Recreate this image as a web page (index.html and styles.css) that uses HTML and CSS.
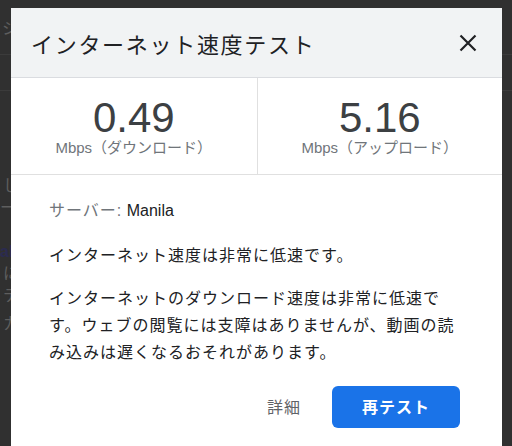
FILE: index.html
```html
<!DOCTYPE html>
<html lang="ja">
<head>
    <meta charset="UTF-8">
    <meta name="viewport" content="width=device-width, initial-scale=1.0">
    <title>インターネット速度テスト</title>
    <link rel="stylesheet" href="styles.css">
</head>
<body>
    <!-- page behind the dimmed overlay -->
    <div class="page">
        <div class="page-bar"><span class="page-glyph">シ</span></div>
        <div class="page-sub"></div>
        <div class="page-text">
            <p class="page-line">し</p>
            <p class="page-line page-rule">ー</p>
            <p class="page-line page-link">ab</p>
            <p class="page-line">に往</p>
            <p class="page-line">テ</p>
            <p class="page-line page-last">カ</p>
        </div>
    </div>

    <div class="dialog">
        <div class="dialog-header">
            <h1 class="dialog-title">インターネット速度テスト</h1>
            <button class="close" aria-label="閉じる">
                <svg width="18" height="18" viewBox="0 0 18 18">
                    <path d="M1.5 1.5 L16.5 16.5 M16.5 1.5 L1.5 16.5" stroke="currentColor" stroke-width="2.2" fill="none"/>
                </svg>
            </button>
        </div>

        <div class="stats">
            <div class="stat">
                <div class="stat-value">0.49</div>
                <div class="stat-label">Mbps（ダウンロード）</div>
            </div>
            <div class="stat stat-right">
                <div class="stat-value">5.16</div>
                <div class="stat-label">Mbps（アップロード）</div>
            </div>
        </div>

        <div class="dialog-body">
            <p class="server"><span class="server-key">サーバー:</span> Manila</p>
            <p class="summary">インターネット速度は非常に低速です。</p>
            <p class="detail">インターネットのダウンロード速度は非常に低速です。ウェブの閲覧には支障はありませんが、動画の読み込みは遅くなるおそれがあります。</p>

            <div class="actions">
                <button class="btn-text">詳細</button>
                <button class="btn-primary">再テスト</button>
            </div>
        </div>
    </div>
</body>
</html>
```

FILE: styles.css
```css
body {
    margin: 0;
    height: 446px;
    overflow: hidden;
    background: #303030;
    font-family: 'Liberation Sans', 'Noto Sans CJK JP', sans-serif;
    position: relative;
}

/* dimmed page */

.page {
    color: #5e5e5e;
    font-size: 16px;
}

.page-bar {
    height: 54px;
    border-bottom: 1px solid #3b3b3b;
    display: flex;
    align-items: center;
    padding-left: 2px;
}

.page-sub {
    height: 35px;
    border-bottom: 1px solid #3b3b3b;
}

.page-text {
    padding-top: 84px;
}

.page-line {
    margin: 0;
    line-height: 22px;
    padding-left: 3px;
}

.page-rule {
    padding-left: 0;
    margin-bottom: 22px;
}

.page-link {
    color: #2b2b50;
    font-weight: bold;
    padding-left: 0;
}

.page-last {
    margin-top: 6px;
}

/* dialog */

.dialog {
    position: absolute;
    top: 8px;
    left: 11px;
    width: 491px;
    height: 460px;
    background: #fff;
    color: #202124;
}

.dialog-header {
    height: 69px;
    background: #f1f3f4;
    border-bottom: 1px solid #dadce0;
    display: flex;
    align-items: center;
    justify-content: space-between;
    padding: 0 25px 0 20px;
}

.dialog-title {
    margin: 0;
    font-size: 22px;
    font-weight: normal;
    letter-spacing: 1.7px;
}

.close {
    border: none;
    background: none;
    padding: 0;
    color: #202124;
    display: flex;
    cursor: pointer;
}

.stats {
    display: grid;
    grid-template-columns: 1fr 1fr;
    border-bottom: 1px solid #e0e0e0;
}

.stat {
    padding: 19px 0 17px;
    text-align: center;
}

.stat-right {
    border-left: 1px solid #e0e0e0;
}

.stat-value {
    font-size: 42px;
    line-height: 42px;
    color: #3c4043;
}

.stat-label {
    font-size: 15px;
    line-height: 18px;
    color: #70757a;
}

.dialog-body {
    padding: 22px 42px 0 38px;
    font-size: 16px;
    line-height: 27px;
    letter-spacing: 1px;
}

.dialog-body p {
    margin: 0;
}

.server {
    margin-bottom: 18px !important;
    letter-spacing: 0;
}

.server-key {
    color: #70757a;
    letter-spacing: 1px;
}

.summary {
    margin-bottom: 16px !important;
}

.actions {
    margin-top: 20px;
    display: flex;
    justify-content: flex-end;
    align-items: center;
    gap: 31px;
}

.btn-text {
    border: none;
    background: none;
    padding: 0;
    font: inherit;
    letter-spacing: 1px;
    color: #5f6368;
    cursor: pointer;
}

.btn-primary {
    width: 128px;
    height: 42px;
    border: none;
    border-radius: 6px;
    background: #1a73e8;
    color: #fff;
    font: inherit;
    font-weight: bold;
    letter-spacing: 1px;
    cursor: pointer;
}
```
